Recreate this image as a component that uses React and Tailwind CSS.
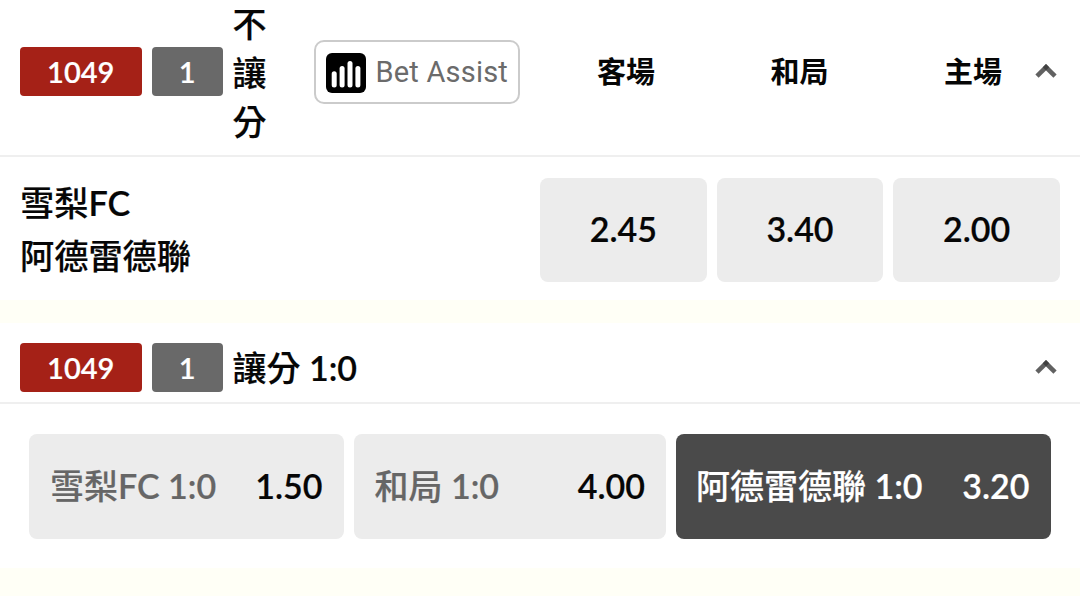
import clsx from 'clsx';

const matchOdds = [
    { id: 'away', label: '客場', price: '2.45' },
    { id: 'draw', label: '和局', price: '3.40' },
    { id: 'home', label: '主場', price: '2.00' },
];

const handicapOdds = [
    { id: 'away', label: '雪梨', suffix: 'FC 1:0', price: '1.50', size: 'w-[314.5px]' },
    { id: 'draw', label: '和局', suffix: ' 1:0', price: '4.00', size: 'w-[312.5px]' },
    { id: 'home', label: '阿德雷德聯', suffix: ' 1:0', price: '3.20', size: 'w-[374.5px]', selected: true },
];

function Badges() {
    return (
        <div className="flex shrink-0 gap-[10px] text-[29px] font-semibold text-white">
            <span className="flex h-[49px] w-[122.5px] items-center justify-center rounded bg-[#a52117]">1049</span>
            <span className="flex h-[49px] w-[70.5px] items-center justify-center rounded bg-[#696969]">1</span>
        </div>
    );
}

function Chevron() {
    return (
        <svg className="h-[14px] w-[22px] shrink-0" viewBox="0 0 22 14" fill="none" stroke="#3a3a3a" strokeOpacity="0.8" strokeWidth="4.6">
            <path d="M2 12.2 12.6 1.6" />
            <path d="M20 12.2 9.4 1.6" />
        </svg>
    );
}

function BetAssist() {
    return (
        <button className="flex h-[64px] w-[206px] shrink-0 items-center gap-[10px] rounded-[10px] border-2 border-[#cbcbcb] pl-[10px] font-['Roboto',sans-serif] text-[29px] font-normal text-[#6b6b6b] [-webkit-text-stroke:0]">
            <svg className="mt-[2px] size-10 shrink-0" viewBox="0 0 40 40">
                <rect width="40" height="40" rx="6" fill="#000" />
                <g stroke="#fff" strokeWidth="5" strokeLinecap="round">
                    <path d="M8.2 20.8V32" />
                    <path d="M16.1 15.5V32" />
                    <path d="M24 10.4V32" />
                    <path d="M31.9 15.5V32" />
                </g>
            </svg>
            <span className="pt-[2px] tracking-[0.2px] whitespace-nowrap">Bet Assist</span>
        </button>
    );
}

export default function App() {
    return (
        <main className="h-[596px] w-[1080px] overflow-hidden bg-[#fffff6] font-['Lato','Noto_Sans_CJK_TC',sans-serif] text-[34px] font-medium text-[#060606] [-webkit-text-stroke:0.2px]">
            {/* Match result */}
            <section className="mb-[23px] h-[300px] bg-white">
                <header className="flex h-[157px] items-center border-b-2 border-[#efefef] pb-[12px] pl-[19.5px]">
                    <Badges />
                    <h2 className="ml-[10px] w-[34px] shrink-0 pt-px leading-[49px]">不讓分</h2>
                    <div className="ml-[47px]">
                        <BetAssist />
                    </div>
                    <div className="ml-[19.5px] flex w-[495.5px] shrink-0 text-[29px] font-bold [-webkit-text-stroke:0]">
                        {matchOdds.map((odd) => (
                            <span key={odd.id} className="w-[173.5px] shrink-0 pl-[58px]">{odd.label}</span>
                        ))}
                    </div>
                    <div className="flex pb-[2px]">
                        <Chevron />
                    </div>
                </header>
                <div className="flex justify-between pt-[21px] pr-[20px] pl-[20px]">
                    <div className="-mt-[2px] text-[34.2px] leading-[53px]">
                        <p>雪梨<span className="font-semibold">FC</span></p>
                        <p>阿德雷德聯</p>
                    </div>
                    <div className="grid w-[520px] grid-cols-3 gap-[10px]">
                        {matchOdds.map((odd) => (
                            <button key={odd.id} className="h-[104px] rounded-lg bg-[#ececec] pb-[3px] font-semibold">{odd.price}</button>
                        ))}
                    </div>
                </div>
            </section>

            {/* Handicap */}
            <section className="h-[245px] bg-white">
                <header className="flex h-[81px] items-center border-b-2 border-[#efefef] pt-[10px] pr-[23px] pl-[19.5px]">
                    <Badges />
                    <h2 className="ml-[10px] leading-[49px]">
                        讓分<span className="font-semibold"> 1:0</span>
                    </h2>
                    <div className="ml-auto flex pb-[2px]">
                        <Chevron />
                    </div>
                </header>
                <div className="flex gap-[10px] pt-[30px] pl-[29px]">
                    {handicapOdds.map((odd) => (
                        <button
                            key={odd.id}
                            className={clsx(
                                'flex h-[105px] items-center justify-between rounded-lg px-[21px] pb-[2px]',
                                odd.size,
                                odd.selected ? 'bg-[#4a4a4a] text-white' : 'bg-[#ececec]'
                            )}
                        >
                            <span className={odd.selected ? '-ml-px text-white' : 'text-[#666666]'}>
                                {odd.label}
                                <span className="font-semibold">{odd.suffix}</span>
                            </span>
                            <span className="font-semibold">{odd.price}</span>
                        </button>
                    ))}
                </div>
            </section>
        </main>
    );
}
